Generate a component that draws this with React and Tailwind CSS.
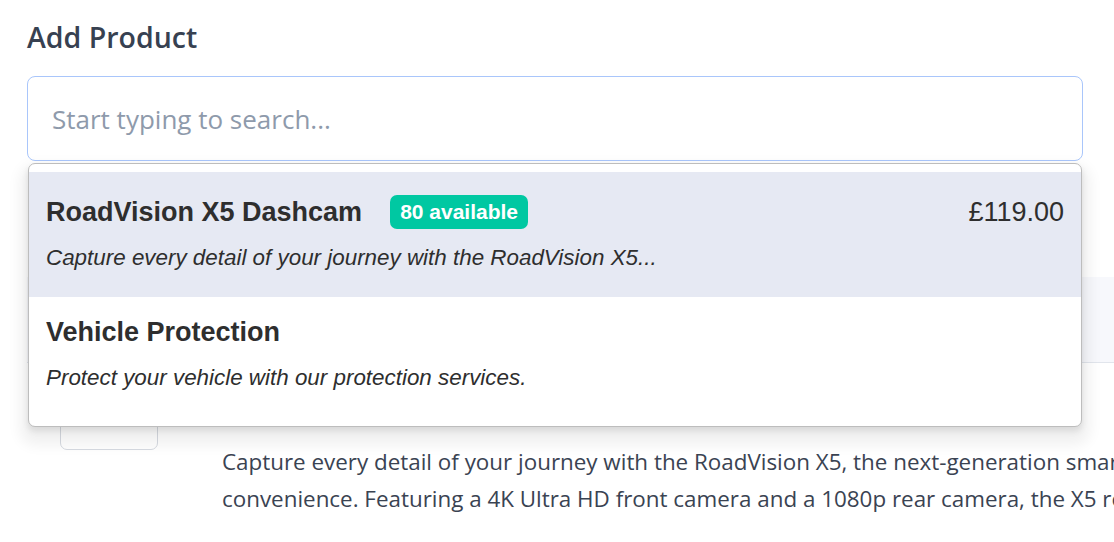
const products = [
  {
    name: "RoadVision X5 Dashcam",
    stock: "80 available",
    price: "£119.00",
    blurb: "Capture every detail of your journey with the RoadVision X5...",
    active: true,
  },
  {
    name: "Vehicle Protection",
    blurb: "Protect your vehicle with our protection services.",
  },
];

function ResultItem({ item }) {
  return (
    <div
      className={
        item.active
          ? "h-[125px] bg-[#e6e9f3] px-[17px] pt-[20px]"
          : "h-[122px] bg-white px-[17px] pt-[15px]"
      }
    >
      <div className="flex h-[40px] items-center justify-between">
        <div className="flex items-center">
          <span className="text-[27px] font-bold leading-[40px] text-[#2e2e2e]">{item.name}</span>
          {item.stock && (
            <span className="ml-[28px] flex h-[34px] items-center rounded-[7px] bg-[#00c8a2] px-[10px] text-[21px] font-bold text-white">
              {item.stock}
            </span>
          )}
        </div>
        {item.price && <span className="text-[27px] leading-[40px] text-[#2e2e2e]">{item.price}</span>}
      </div>
      <p className="mt-[11px] text-[22.4px] italic leading-[30px] text-[#2e2e2e]">{item.blurb}</p>
    </div>
  );
}

export default function App() {
  return (
    <div className="relative h-[542px] w-full overflow-hidden bg-white font-['Open_Sans',sans-serif]">
      <div className="pl-[27px] pt-[18px]">
        <h2 className="h-[38px] text-[28.5px] font-semibold leading-[38px] text-[#374151]">Add Product</h2>

        <div className="relative mt-[20px] w-[1056px]">
          <input
            type="text"
            placeholder="Start typing to search..."
            className="h-[85px] w-full rounded-[8px] border-[1.5px] border-[#a9c6fb] bg-white px-[24px] text-[26px] text-[#374151] outline-none placeholder:text-[#8e9aab]"
          />

          {/* results list sits over the line items */}
          <div className="absolute left-[1px] right-[1px] top-full z-10 mt-[2px] overflow-hidden rounded-[7px] border border-[#bdbdbd] bg-white pb-[7px] pt-[8px] font-['Liberation_Sans',Arial,sans-serif] shadow-[0_4px_6px_rgba(0,0,0,0.1),0_10px_14px_8px_rgba(0,0,0,0.06)]">
            {products.map((p) => (
              <ResultItem key={p.name} item={p} />
            ))}
          </div>
        </div>

        {/* line items underneath */}
        <div className="mt-[116px] h-[86px] w-[1200px] border-b border-[#e1e5ec] bg-[#f7f8fc]" />
        <div className="flex">
          <div className="ml-[33px] mt-[7px] h-[80px] w-[98px] shrink-0 rounded-[7px] border border-[#d6dae1]" />
          <div className="ml-[64px] mt-[80px] whitespace-nowrap text-[22.4px] leading-[37px] text-[#3a4352]">
            <p>Capture every detail of your journey with the RoadVision X5, the next-generation smart dashcam built for safety and</p>
            <p>convenience. Featuring a 4K Ultra HD front camera and a 1080p rear camera, the X5 records everything on the road.</p>
          </div>
        </div>
      </div>
    </div>
  );
}
